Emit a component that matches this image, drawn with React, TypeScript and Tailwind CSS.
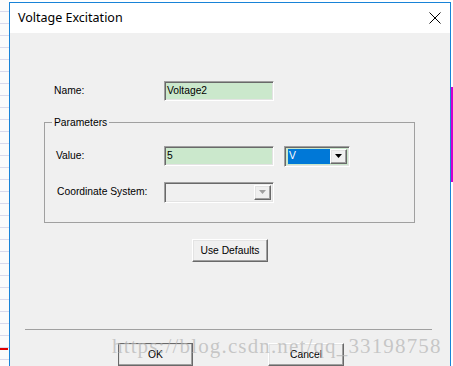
export default function App() {
  const sunken =
    "border border-t-[#a0a0a0] border-l-[#a0a0a0] border-b-white border-r-white shadow-[inset_1px_1px_0_#696969,inset_-1px_-1px_0_#e3e3e3]";
  const raised =
    "border border-t-white border-l-white border-b-[#696969] border-r-[#696969] shadow-[inset_-1px_-1px_0_#a0a0a0,inset_1px_1px_0_#e3e3e3] bg-[#f0f0f0]";

  return (
    <div className="relative flex w-[453px] h-[366px] overflow-hidden bg-white font-['Liberation_Sans',Arial,sans-serif] text-[10.3px] text-black">
      {/* background app strip on the left */}
      <div className="relative w-[9px] h-full bg-[repeating-linear-gradient(to_bottom,#fbfbfb_0px,#fbfbfb_11px,#d9d9ec_11px,#d9d9ec_12px)]">
        <div className="absolute left-0 top-[348px] w-[8px] h-[2px] bg-[#e00000]" />
      </div>

      {/* dialog window */}
      <div className="mt-[2px] w-[442px] border-x border-t border-[#1883d7] bg-[#f0f0f0] flex flex-col">
        {/* title bar */}
        <div className="h-[30px] shrink-0 bg-white flex items-center justify-between pl-[8px] pr-[8px]">
          <span className="font-['Noto_Sans',sans-serif] text-[12.5px] text-black">Voltage Excitation</span>
          <svg width="12" height="12" viewBox="0 0 12 12" className="mr-[1px]">
            <path d="M0.5 0.5 L11.5 11.5 M11.5 0.5 L0.5 11.5" stroke="#000" strokeWidth="1" />
          </svg>
        </div>

        {/* body */}
        <div className="flex flex-col">
          {/* name row */}
          <div className="mt-[48px] flex items-center h-[20px]">
            <span className="ml-[44px] w-[110px]">Name:</span>
            <div className={`w-[110px] h-[20px] bg-[#cbe8cc] ${sunken} flex items-center pl-[2px]`}>Voltage2</div>
          </div>

          {/* parameters group */}
          <div className="relative ml-[34px] mt-[21px] w-[371px] h-[101px] border border-[#a0a0a0] px-[11px]">
            <span className="absolute -top-[8px] left-[7px] bg-[#f0f0f0] px-[2px]">Parameters</span>
            <div className="mt-[23px] flex items-center h-[20px]">
              <span className="w-[108px]">Value:</span>
              <div className={`w-[110px] h-[20px] bg-[#cbe8cc] ${sunken} flex items-center pl-[2px]`}>5</div>
              <div className={`ml-[10px] w-[66px] h-[21px] bg-[#cbe8cc] ${sunken} flex items-center p-[2px] pl-[3px]`}>
                <div className="flex-1 h-full bg-[#0078d7] text-white flex items-center pl-[1px]">V</div>
                <div className={`w-[17px] h-full ${raised} flex items-center justify-center`}>
                  <svg width="7" height="4" viewBox="0 0 7 4">
                    <path d="M0 0 H7 L3.5 4 Z" fill="#000" />
                  </svg>
                </div>
              </div>
            </div>
            <div className="mt-[16px] flex items-center h-[20px]">
              <span className="w-[108px] pl-[1px]">Coordinate System:</span>
              <div className={`w-[110px] h-[21px] bg-[#f0f0f0] ${sunken} flex items-center justify-end p-[2px]`}>
                <div className={`w-[17px] h-full ${raised} flex items-center justify-center`}>
                  <svg width="7" height="4" viewBox="0 0 7 4">
                    <path d="M0 0 H7 L3.5 4 Z" fill="#a0a0a0" />
                  </svg>
                </div>
              </div>
            </div>
          </div>

          {/* use defaults */}
          <div className="mt-[16px] flex justify-center">
            <button className={`w-[76px] h-[23px] ${raised}`}>Use Defaults</button>
          </div>

          {/* separator */}
          <div className="mt-[67px] ml-[15px] w-[407px] h-[1px] bg-[#a0a0a0]" />

          {/* bottom buttons */}
          <div className="mt-[13px] flex">
            <button className={`ml-[108px] w-[75px] h-[23px] ${raised} outline outline-1 outline-[#696969] -outline-offset-1`}>OK</button>
            <button className={`ml-[75px] w-[76px] h-[23px] ${raised}`}>Cancel</button>
          </div>
        </div>
      </div>

      {/* right strip of the app behind */}
      <div className="relative flex-1 h-full bg-white">
        <div className="absolute top-[87px] left-0 w-full h-[95px] bg-[#d000d0]" />
      </div>

      {/* watermark over the dialog */}
      <div className="pointer-events-none absolute left-[112px] top-[331px] font-['Liberation_Serif',serif] text-[21px] tracking-[1.15px] text-[#b4b4b4]/70 whitespace-nowrap">
        https://blog.csdn.net/qq_33198758
      </div>
    </div>
  );
}
